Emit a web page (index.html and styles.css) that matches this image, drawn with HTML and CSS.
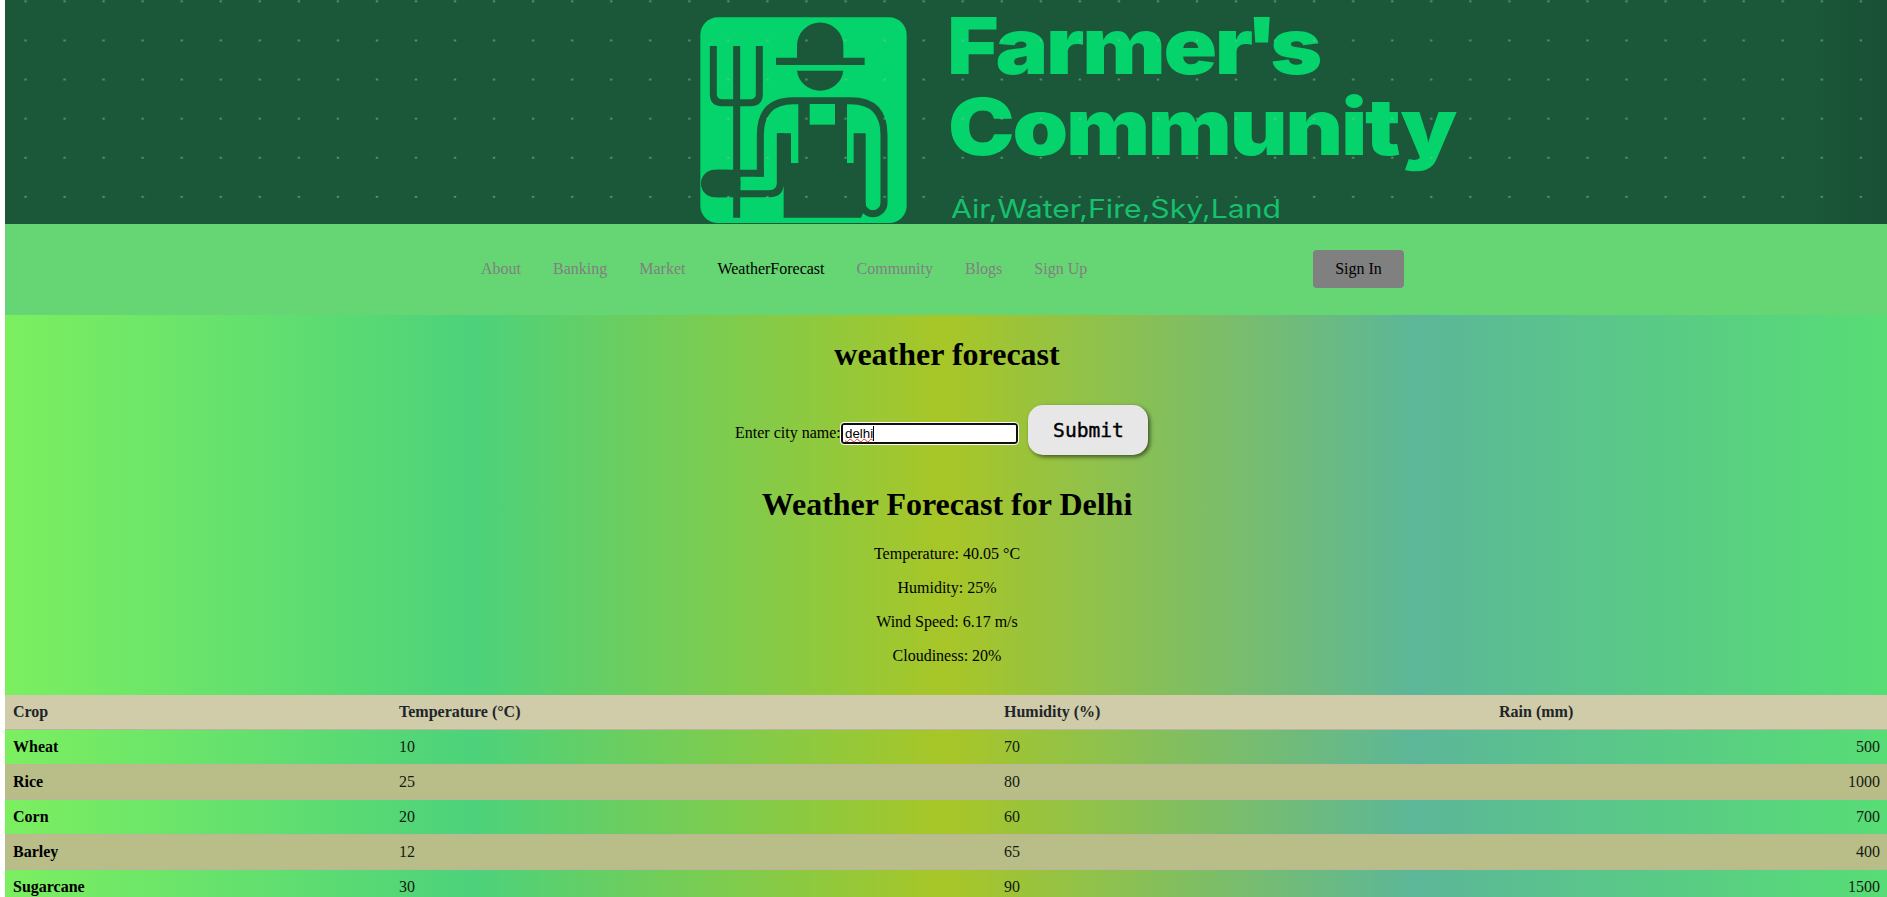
FILE: index.html
```html
<!DOCTYPE html>
<html lang="en">
<head>
<meta charset="utf-8">
<title>Weather Forecast</title>
<link rel="stylesheet" href="styles.css">
</head>
<body>
<header class="banner">
  <svg width="1882" height="224" viewBox="5 0 1882 224" role="img" aria-label="Farmer's Community">
    <defs>
      <pattern id="dots" x="5" y="-18.2" width="39.05" height="39.1" patternUnits="userSpaceOnUse">
        <ellipse cx="20.5" cy="19.5" rx="1.4" ry="1" fill="#7fc49c" opacity=".6"/>
      </pattern>
      <linearGradient id="edge" x1="0" x2="1">
        <stop offset=".96" stop-color="#1b5739"/>
        <stop offset="1" stop-color="#185035"/>
      </linearGradient>
    </defs>
    <rect x="5" width="1882" height="224" fill="url(#edge)"/>
    <g transform="translate(680 0) scale(.33333)">
      <rect x="61" y="52" width="619" height="617" rx="52" fill="#05d36b"/>
      <g fill="#1b5739">
        <path d="M351 173V137A69.500 69.500 0 0 1 490 137V173H554V195H288V173Z"/>
        <path d="M351 212H490A70 68 0 0 1 351 212Z"/>
        <path d="M355 302H501V489H521V400H557V620L543 653H311V560L291 550V400H333V489H355Z"/>
        <rect x="63" y="509" width="118" height="83" rx="41"/>
        <path d="M110 509H251V530H181V592H110Z"/>
      </g>
      <g fill="none" stroke="#1b5739" stroke-width="21">
        <path d="M100 138V283Q100 308 125 308H213Q238 308 238 283V138M170 138V653"/>
        <path d="M241 530V405Q241 302 340 302H512Q612 302 612 405V608A33 33 0 0 1 546 608"/>
        <path d="M180 581H268Q301 581 301 548V400"/>
      </g>
      <rect x="389" y="312" width="76" height="62" fill="#05d36b"/>
    </g>
    <g class="brand">
      <text class="brand-name" x="947" y="74" textLength="373" lengthAdjust="spacingAndGlyphs">Farme<tspan class="tight">r'</tspan>s</text>
      <text class="brand-name" x="948" y="155" textLength="507" lengthAdjust="spacingAndGlyphs">Community</text>
      <text class="brand-tag" x="951" y="218" textLength="330" lengthAdjust="spacingAndGlyphs">Air,Water,Fire,Sky,Land</text>
    </g>
    <rect x="5" width="1882" height="224" fill="url(#dots)"/>
  </svg>
</header>
<nav class="nav">
  <ul class="links">
    <li><a>About</a></li>
    <li><a>Banking</a></li>
    <li><a>Market</a></li>
    <li><a class="active">WeatherForecast</a></li>
    <li><a>Community</a></li>
    <li><a>Blogs</a></li>
    <li><a>Sign Up</a></li>
  </ul>
  <a class="signin">Sign In</a>
</nav>
<main class="content">
  <section class="forecast">
    <h1 class="title">weather forecast</h1>
    <form class="search">
      <label class="label" for="city">Enter city name:</label>
      <div class="field" id="city"><span class="typed">delhi</span><span class="caret"></span></div>
      <button class="submit" type="button">Submit</button>
    </form>
    <h1 class="title result">Weather Forecast for Delhi</h1>
    <p class="line">Temperature: 40.05 °C</p>
    <p class="line">Humidity: 25%</p>
    <p class="line">Wind Speed: 6.17 m/s</p>
    <p class="line">Cloudiness: 20%</p>
  </section>
  <table class="crops">
    <colgroup><col class="c1"><col class="c2"><col class="c3"><col class="c4"></colgroup>
    <thead><tr><th>Crop</th><th>Temperature (°C)</th><th>Humidity (%)</th><th>Rain (mm)</th></tr></thead>
    <tbody>
      <tr><th>Wheat</th><td>10</td><td>70</td><td>500</td></tr>
      <tr><th>Rice</th><td>25</td><td>80</td><td>1000</td></tr>
      <tr><th>Corn</th><td>20</td><td>60</td><td>700</td></tr>
      <tr><th>Barley</th><td>12</td><td>65</td><td>400</td></tr>
      <tr><th>Sugarcane</th><td>30</td><td>90</td><td>1500</td></tr>
    </tbody>
  </table>
</main>
</body>
</html>
```
FILE: styles.css
```css
* { box-sizing: border-box; }
html { height: 100%; overflow: hidden; background: #fff; }
body {
  margin: 0;
  padding-left: 5px;
  height: 897px;
  overflow: hidden;
  font: 16px/18px "Liberation Serif", "Times New Roman", serif;
  color: #000;
}
.banner { height: 224px; }
.banner svg { display: block; }
.brand { font-family: Inter, sans-serif; fill: #05d36b; }
.brand-name { font-size: 78px; font-weight: 900; letter-spacing: -2px; }
.tight { letter-spacing: -7px; }
.brand-tag { font-size: 25.500px; fill: #16c06d; }

.nav {
  display: flex;
  align-items: center;
  height: 91px;
  padding: 0 0 1px 476px;
  background: #65d673;
}
.links {
  display: flex;
  gap: 32px;
  width: 832px;
  margin: 0;
  padding: 0;
  list-style: none;
  color: #808080;
}
.active { color: #000; }
.signin {
  width: 91px;
  height: 38px;
  border-radius: 4px;
  background: #808080;
  line-height: 38px;
  text-align: center;
}

.content {
  height: 582px;
  overflow: hidden;
  background: linear-gradient(90deg, #7cef60, #4dd27b 25%, #a8c627 50%, #5cb798 75%, #57dd75);
}
.forecast { height: 380px; padding: 21px 0 0 2px; text-align: center; }
.title { margin: 0; font-size: 32px; line-height: 37px; }
.search {
  display: flex;
  align-items: center;
  height: 50px;
  margin: 32px 0 31px;
  padding-left: 728px;
}
.label { width: 106px; padding-top: 6px; text-align: left; white-space: nowrap; }
.field {
  display: flex;
  align-items: center;
  width: 177px;
  height: 21px;
  margin: 7px 10px 0 0;
  padding-left: 2px;
  border: 2px solid #101010;
  border-radius: 3px;
  outline: 1px solid #fff;
  background: #fff;
  font: 13.333px/15px "Liberation Sans", Arial, sans-serif;
}
.typed {
  text-decoration: underline wavy #e33 1px;
  text-decoration-skip-ink: none;
  text-underline-offset: 0;
}
.caret { width: 1px; height: 15px; background: #000; }
.submit {
  width: 120px;
  height: 50px;
  padding: 0 0 0 1px;
  border: 0;
  border-radius: 15px;
  background: #e7e7e7;
  box-shadow: 2px 2px 4px rgba(0, 0, 0, .55);
  font: 19.600px "DejaVu Sans Mono", monospace;
  -webkit-text-stroke: .4px #000;
  color: #000;
}
.result { margin-bottom: 22px; }
.line { margin: 0 0 16px; }

.crops {
  width: 1882px;
  table-layout: fixed;
  border-collapse: separate;
  border-spacing: 0;
  text-align: left;
}
.c1 { width: 386px; }
.c2 { width: 605px; }
.c3 { width: 495px; }
.c4 { width: 396px; }
.crops th, .crops td {
  height: 35px;
  padding: 0 8px 1px;
  border-bottom: 1px solid #bab69b;
}
.crops thead th { background: #d0ccaa; color: #212529; }
.crops tbody tr:nth-child(even) { background: #b9be88; }
.crops td { color: #151a10; }
.crops td:last-child { padding-right: 7px; text-align: right; }
```
